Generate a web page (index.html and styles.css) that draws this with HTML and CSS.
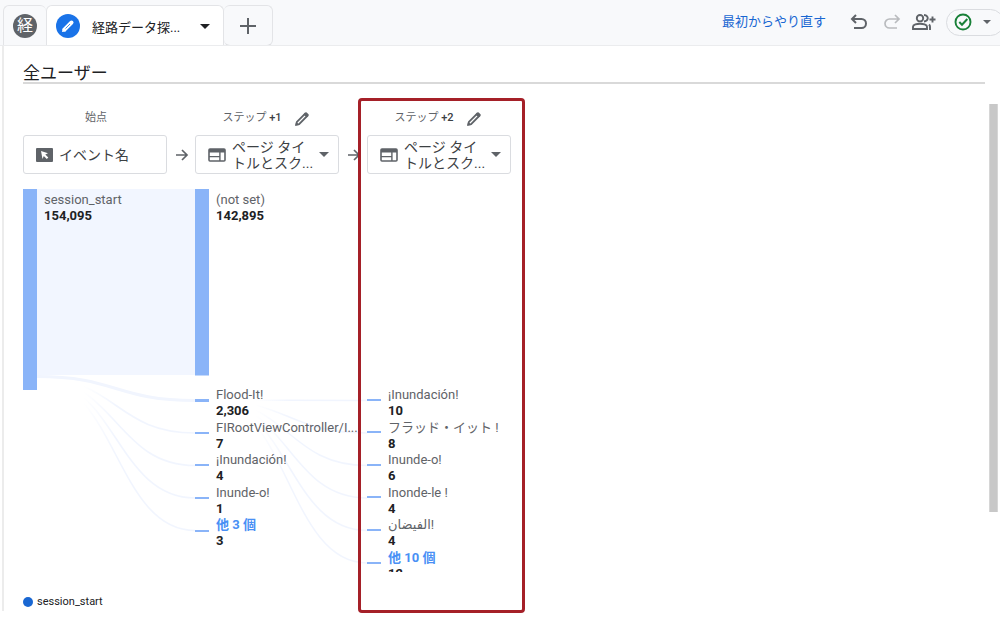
FILE: index.html
```html
<!DOCTYPE html>
<html lang="ja">
<head>
<meta charset="utf-8">
<meta name="viewport" content="width=device-width, initial-scale=1">
<title>経路データ探索</title>
<link rel="stylesheet" href="styles.css">
</head>
<body>
<svg class="defs" aria-hidden="true">
  <symbol id="i-page" viewBox="0 0 18 14"><rect x="1" y="1" width="16" height="12" rx="1" fill="none" stroke="#5f6368" stroke-width="1.6"/><path d="M1 1h16v3.4H1zM11.2 4h1.4v9h-1.4zM1 8h11v1.3H1z" fill="#5f6368"/></symbol>
  <symbol id="i-pencil" viewBox="0 0 16 16"><path d="M2.300 13.700l.6-2.800L11 2.800l2.200 2.200-8.100 8.100z" fill="none" stroke="#5f6368" stroke-width="1.800"/><path d="M1.200 14.800l.8-3.900 3.100 3.100zM9.400 3.400l1.900-1.900a1 1 0 0 1 1.400 0l1.800 1.800a1 1 0 0 1 0 1.400l-1.900 1.900z" fill="#5f6368"/></symbol>
  <symbol id="i-arrow" viewBox="0 0 14 14"><path d="M1 7h11M7 2l5 5-5 5" fill="none" stroke="#5f6368" stroke-width="1.700"/></symbol>
  <symbol id="i-caret" viewBox="0 0 10 5"><path d="M0 0h10L5 5z" fill="currentColor"/></symbol>
</svg>

<header class="topbar">
  <nav class="tabs" aria-label="タブ">
    <button class="tab tab-report" type="button"><span class="badge badge-gray">経</span></button>
    <button class="tab tab-active" type="button">
      <span class="badge badge-blue"><svg width="16" height="16" viewBox="0 0 16 16" aria-hidden="true"><path d="M4.500 11.500l7-7" stroke="#fff" stroke-width="4" stroke-linecap="round"/><path d="M2 14l.8-4L6 13.200z" fill="#fff"/><path d="M5.500 10.500l4.500-4.500" stroke="#1a73e8" stroke-width=".8"/></svg></span>
      <span class="tab-name">経路データ探...</span>
      <svg class="caret" width="10" height="5"><use href="#i-caret"/></svg>
    </button>
    <button class="tab tab-add" type="button" aria-label="追加"><svg width="16" height="16" viewBox="0 0 16 16"><path d="M8 0v16M0 8h16" stroke="#5f6368" stroke-width="2"/></svg></button>
  </nav>
  <div class="actions">
    <a class="restart" href="#">最初からやり直す</a>
    <button class="icon-btn undo" type="button" aria-label="元に戻す"><svg width="18" height="16" viewBox="0 0 18 16"><path d="M6 1L2 5l4 4M2 5h9.500a4.500 4.500 0 0 1 0 9H4" fill="none" stroke="#5f6368" stroke-width="2"/></svg></button>
    <button class="icon-btn redo" type="button" aria-label="やり直す"><svg width="18" height="16" viewBox="0 0 18 16"><path d="M12 1l4 4-4 4M16 5H6.500a4.500 4.500 0 0 0 0 9H14" fill="none" stroke="#b9bbbe" stroke-width="1.700"/></svg></button>
    <button class="icon-btn share" type="button" aria-label="共有"><svg width="24" height="16" viewBox="0 0 24 16"><g fill="none" stroke="#5f6368" stroke-width="1.900"><circle cx="8" cy="4.200" r="3.200"/><path d="M1 15v-2.300c0-2 4-3 7-3s7 1 7 3V15z"/><path d="M12 1c3 .2 4 2 3.700 3.600-.3 1.700-1.600 2.700-3.700 2.900"/><path d="M18 15.900v-3.200c0-1-.4-1.600-1-2.200M20.500 2.500v6M17.500 5.500h6"/></g></svg></button>
    <button class="status" type="button" aria-label="ステータス"><svg width="18" height="18" viewBox="0 0 18 18"><circle cx="9" cy="9" r="7.500" fill="none" stroke="#188038" stroke-width="1.900"/><path d="M5.300 9l2.700 2.700L13.300 6" fill="none" stroke="#188038" stroke-width="2"/></svg><svg class="caret-gray" width="8" height="4"><use href="#i-caret"/></svg></button>
  </div>
</header>

<main class="panel">
  <h1 class="title">全ユーザー</h1>
  <section class="flow">
    <svg class="links" width="360" height="400" viewBox="0 0 360 400" aria-hidden="true">
      <defs><linearGradient id="fade" gradientUnits="userSpaceOnUse" x1="60" y1="0" x2="172" y2="0"><stop offset="0" stop-color="#f1f5fe" stop-opacity="0"/><stop offset=".3" stop-color="#f1f5fe"/></linearGradient>
      <linearGradient id="fade2" gradientUnits="userSpaceOnUse" x1="232" y1="0" x2="345" y2="0"><stop offset="0" stop-color="#f1f5fe" stop-opacity="0"/><stop offset=".3" stop-color="#f1f5fe"/></linearGradient></defs>
      <path d="M14 0h158v186H14z" fill="#f2f6ff"/>
      <path d="M14 187.500C93 187.500 93 211.500 172 211.500" fill="none" stroke="#f1f5fe" stroke-width="3"/>
      <g fill="none" stroke="url(#fade)" stroke-width="1.600"><path d="M14 189C93 189 93 244 172 244"/><path d="M14 190C93 190 93 276.500 172 276.500"/><path d="M14 190C93 190 93 309 172 309"/><path d="M14 191C93 191 93 341.500 172 341.500"/></g>
      <g fill="none" stroke="url(#fade2)" stroke-width="1.500"><path d="M186 211C265 211 265 211.500 344 211.500"/><path d="M186 211C265 211 265 244 344 244"/><path d="M186 211C265 211 265 276.500 344 276.500"/><path d="M186 211C265 211 265 309 344 309"/><path d="M186 211C265 211 265 341.500 344 341.500"/><path d="M186 211C265 211 265 374 344 374"/></g>
      <g fill="#8ab4f8"><path d="M0 0h14v201H0zM172 0h14v186.500h-14z"/><path d="M172 210h14v3h-14zM172 243h14v2h-14zM172 275h14v2h-14zM172 308h14v2h-14zM172 341h14v2h-14z"/><path d="M344 210h14v2h-14zM344 242h14v2h-14zM344 275h14v2h-14zM344 307h14v2h-14zM344 340h14v2h-14zM344 373h14v2h-14z"/></g>
    </svg>

    <div class="step">
      <div class="step-head"><span>始点</span></div>
      <div class="picker-row">
        <button class="picker" type="button"><svg class="kind" width="17" height="14" viewBox="0 0 17 14"><rect width="17" height="14" rx="1" fill="#5f6368"/><path d="M5 3l7 2.200-2.700 1.400 3 3-1.500 1.500-3-3L6.500 11z" fill="#fff"/></svg><span class="picker-name">イベント名</span></button>
        <svg class="next" width="14" height="14"><use href="#i-arrow"/></svg>
      </div>
      <dl class="node first"><dt>session_start</dt><dd>154,095</dd></dl>
    </div>

    <div class="step">
      <div class="step-head editable"><span>ステップ <b>+1</b></span><button class="edit" type="button" aria-label="ステップ +1 を編集"><svg width="16" height="16"><use href="#i-pencil"/></svg></button></div>
      <div class="picker-row">
        <button class="picker" type="button"><svg class="kind" width="18" height="14"><use href="#i-page"/></svg><span class="picker-name">ページ タイ<br>トルとスク...</span><svg class="caret-gray" width="10" height="5"><use href="#i-caret"/></svg></button>
        <svg class="next" width="14" height="14"><use href="#i-arrow"/></svg>
      </div>
      <dl class="node first"><dt>(not set)</dt><dd>142,895</dd></dl>
      <div class="nodes">
        <dl class="node"><dt>Flood-It!</dt><dd>2,306</dd></dl>
        <dl class="node"><dt>FIRootViewController/I...</dt><dd>7</dd></dl>
        <dl class="node"><dt>¡Inundación!</dt><dd>4</dd></dl>
        <dl class="node"><dt>Inunde-o!</dt><dd>1</dd></dl>
        <dl class="node more"><dt>他 3 個</dt><dd>3</dd></dl>
      </div>
    </div>

    <div class="step highlighted">
      <div class="step-head editable"><span>ステップ <b>+2</b></span><button class="edit" type="button" aria-label="ステップ +2 を編集"><svg width="16" height="16"><use href="#i-pencil"/></svg></button></div>
      <div class="picker-row">
        <button class="picker" type="button"><svg class="kind" width="18" height="14"><use href="#i-page"/></svg><span class="picker-name">ページ タイ<br>トルとスク...</span><svg class="caret-gray" width="10" height="5"><use href="#i-caret"/></svg></button>
      </div>
      <div class="node first"></div>
      <div class="nodes">
        <dl class="node"><dt>¡Inundación!</dt><dd>10</dd></dl>
        <dl class="node"><dt>フラッド・イット !</dt><dd>8</dd></dl>
        <dl class="node"><dt>Inunde-o!</dt><dd>6</dd></dl>
        <dl class="node"><dt>Inonde-le !</dt><dd>4</dd></dl>
        <dl class="node"><dt>الفيضان!</dt><dd>4</dd></dl>
        <dl class="node more"><dt>他 10 個</dt><dd>12</dd></dl>
      </div>
    </div>
    <div class="scrollbar"></div>
  </section>
  <footer class="legend"><span class="dot"></span>session_start</footer>
</main>
</body>
</html>
```
FILE: styles.css
```css
* , *::after { box-sizing: border-box; }
body {
  margin: 0;
  min-height: 100vh;
  background: #fff;
  color: #202124;
  font: 13px/16px Roboto, "Noto Sans CJK JP", "DejaVu Sans", sans-serif;
}
button {
  border: 0;
  padding: 0;
  background: none;
  color: inherit;
  font: inherit;
}
svg { display: block; flex: none; }
.defs { position: absolute; width: 0; height: 0; }

.topbar {
  display: flex;
  justify-content: space-between;
  height: 46px;
  padding: 5px 0 0 3px;
  background: #f8f9fb;
  border-bottom: 1px solid #ebecee;
  overflow: hidden;
}
.tabs { display: flex; height: 41px; }
.tab {
  display: flex;
  align-items: center;
  border: 1px solid #e3e4e7;
  border-bottom: 0;
  border-radius: 6px 6px 0 0;
}
.tab-report { width: 43px; padding-left: 9px; border-right: 0; }
.tab-active {
  width: 178px;
  padding-left: 9px;
  background: #fff;
}
.tab-add {
  justify-content: center;
  width: 49px;
  height: 41px;
  border-left: 0;
  border-bottom: 1px solid #dcdde0;
  border-radius: 6px;
}
.badge {
  display: flex;
  align-items: center;
  justify-content: center;
  width: 24px;
  height: 24px;
  border-radius: 50%;
  color: #fff;
}
.badge-gray { background: #5f6368; font-size: 16px; }
.badge-blue { background: #1a73e8; }
.tab-name { width: 120px; padding: 4px 0 0 12px; text-align: left; white-space: nowrap; }
.caret { color: #202124; }
.caret-gray { color: #5f6368; }

.actions { display: flex; align-items: center; height: 34px; }
.restart { margin-right: 24px; color: #1967d2; text-decoration: none; }
.undo { margin-right: 15px; }
.redo { margin-right: 11px; }
.share { margin-right: 10px; }
.status {
  display: flex;
  align-items: center;
  gap: 11px;
  width: 58px;
  height: 27px;
  margin-right: -4px;
  padding-left: 7px;
  border: 1px solid #dadce0;
  border-radius: 14px;
}

.panel {
  margin-left: 2px;
  padding: 16px 15px 1px 19px;
  border-left: 2px solid #ececec;
}
.title {
  margin: 0;
  height: 22px;
  border-bottom: 2px solid #d9d9d9;
  font-size: 17px;
  line-height: 22px;
  font-weight: 400;
}
.flow {
  position: relative;
  display: grid;
  grid-template-columns: 172px 172px 144px;
  align-content: start;
  height: 509px;
  padding-top: 21px;
}
.links { position: absolute; left: 0; top: 105px; }
.step { position: relative; min-width: 0; }
.step-head {
  display: flex;
  align-items: center;
  justify-content: center;
  width: 146px;
  height: 26px;
  color: #5f6368;
  font-size: 11px;
}
.step-head b { color: #3c4043; font-weight: 500; }
.editable { gap: 12px; padding-right: 4px; }
.edit { padding-top: 2px; }
.picker-row { display: flex; align-items: center; gap: 8px; margin-top: 4px; }
.picker {
  display: flex;
  flex: none;
  align-items: center;
  width: 144px;
  height: 39px;
  padding-left: 12px;
  border: 1px solid #dadce0;
  border-radius: 3px;
  background: #fff;
  color: #3c4043;
  font-size: 14px;
  text-align: left;
}
.picker-name { width: 93px; padding-left: 6px; white-space: nowrap; }
.next { flex: none; }
.node { margin: 0; padding-left: 21px; white-space: nowrap; }
.node dt { color: #5f6368; }
.node dd { margin: 0; font-weight: 700; }
.first { height: 32px; margin-top: 18px; }
.nodes {
  display: grid;
  grid-template-rows: 33px 32px 33px 32px 33px 32px;
  height: 185px;
  margin-top: 163px;
  overflow: hidden;
}
.more dt { color: #4990f5; font-weight: 700; }
.highlighted::after {
  content: "";
  position: absolute;
  left: -9px;
  top: -7px;
  width: 167px;
  height: 515px;
  border: 3px solid #a52028;
  border-radius: 4px;
  pointer-events: none;
}
.scrollbar {
  position: absolute;
  right: -13px;
  top: 20px;
  width: 9px;
  height: 408px;
  border: solid #d6d6d6;
  border-width: 0 1px;
  background: #c8c8c8;
}
.legend { display: flex; align-items: center; gap: 4px; padding-top: 1px; font-size: 11px; }
.dot { width: 10px; height: 10px; border-radius: 50%; background: #1967d2; }
```
